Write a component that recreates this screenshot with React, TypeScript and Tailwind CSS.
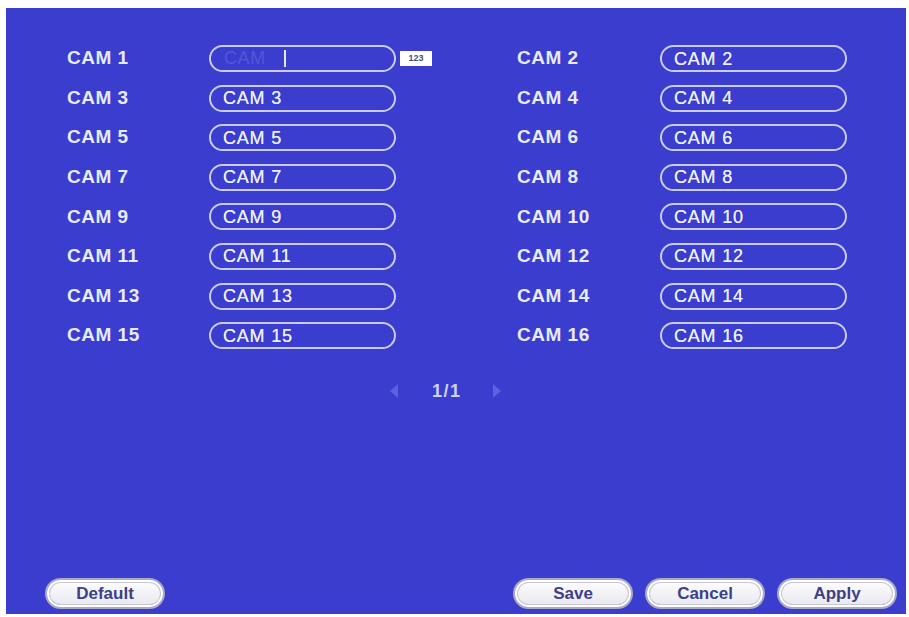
import { FC } from 'react'

const font = { fontFamily: '"Liberation Sans", Arial, sans-serif' }

const cams = Array.from({ length: 16 }, (_, i) => i + 1)

const CamField: FC<{ n: number }> = ({ n }) => {
  if (n === 1) {
    return (
      <div className="flex items-center">
        <div className="flex h-[27px] w-[187px] items-center rounded-full border-2 border-[#c9cbf3] pl-[13px]">
          <span className="text-[18px] tracking-[0.6px] text-[#4f58d8]">CAM</span>
          <span className="ml-[18px] h-[17px] w-[2px] bg-[#e6e8ff]" />
        </div>
        <div className="ml-[4px] flex h-[15px] w-[32px] items-center justify-center bg-white text-[9px] font-bold text-[#4a4a70]">
          123
        </div>
      </div>
    )
  }
  return (
    <div className="flex h-[27px] w-[187px] items-center rounded-full border-2 border-[#c9cbf3] pl-[12px]">
      <span className="text-[18px] leading-none tracking-[0.8px] text-[#eceeff] [text-shadow:0_0_0.6px_#eceeff]">
        CAM {n}
      </span>
    </div>
  )
}

const Btn: FC<{ label: string }> = ({ label }) => (
  <button
    type="button"
    className="flex h-[31px] w-[120px] items-center justify-center rounded-full border-2 border-[#a9abc4] bg-gradient-to-b from-[#ffffff] to-[#e6e6ee] text-[17px] font-bold text-[#3d3f88] shadow-[inset_0_0_0_2px_#ffffff,inset_0_0_0_3px_#c6c6d6]"
  >
    {label}
  </button>
)

export default function App() {
  return (
    <div className="h-[617px] w-[909px] bg-white pb-[3px] pl-[6px] pr-[3px] pt-[8px]" style={font}>
      <div className="flex h-full flex-col bg-[#3a3dcd] pb-[5px] pl-[39px] pr-[9px] pt-[37px]">
        <div className="grid grid-cols-[450px_1fr] gap-y-[12.6px] pl-[22px]">
          {cams.map(n => (
            <div key={n} className="flex h-[27px] items-center">
              <span
                className={
                  n % 2 === 1
                    ? 'w-[142px] text-[19px] font-bold tracking-[0.5px] text-[#e8eaff]'
                    : 'w-[143px] text-[19px] font-bold tracking-[0.5px] text-[#e8eaff]'
                }
              >
                CAM {n}
              </span>
              <CamField n={n} />
            </div>
          ))}
        </div>

        {/* 翻页 */}
        <div className="mt-[34px] flex h-[16px] items-center pl-[345px]">
          <svg width="8" height="14" viewBox="0 0 8 14">
            <path d="M8 0 L0 7 L8 14 Z" fill="#5a63dc" />
          </svg>
          <span className="ml-[34px] text-[18px] font-bold tracking-[1.5px] text-[#cdd0f7]">1/1</span>
          <svg width="8" height="14" viewBox="0 0 8 14" className="ml-[31px]">
            <path d="M0 0 L8 7 L0 14 Z" fill="#5a63dc" />
          </svg>
        </div>

        <div className="mt-auto flex items-center">
          <Btn label="Default" />
          <div className="ml-auto flex gap-[12px]">
            <Btn label="Save" />
            <Btn label="Cancel" />
            <Btn label="Apply" />
          </div>
        </div>
      </div>
    </div>
  )
}
